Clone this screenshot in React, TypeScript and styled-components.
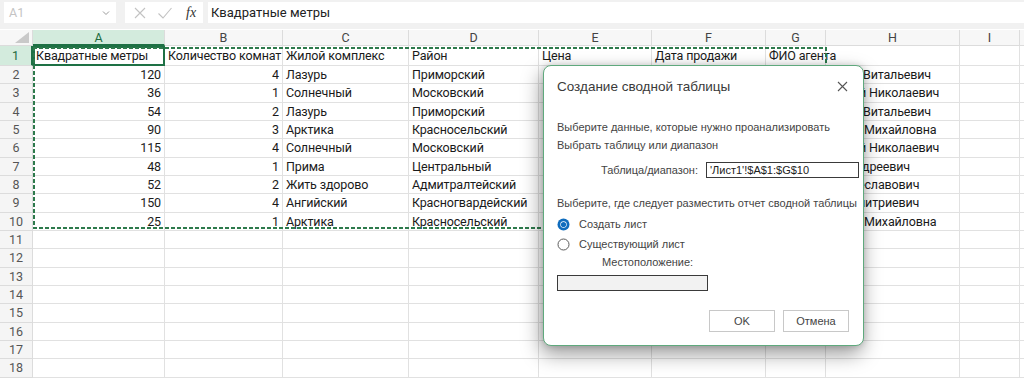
import React from "react";
import styled, { createGlobalStyle } from "styled-components";

const GlobalStyle = createGlobalStyle`
  html, body {
    margin: 0;
    padding: 0;
    background: #ffffff;
    overflow: hidden;
  }
  * { box-sizing: border-box; }
`;

const COLS = [132, 118, 126, 130, 113, 114, 60, 134, 60, 40];
const LETTERS = ["A", "B", "C", "D", "E", "F", "G", "H", "I", "J"];
const ROW_H = 18.33;

// агент: [часть под окном, видимая часть, ширина первой части]
type Agent = [string, string, number];

const agents: Agent[] = [
  ["Петров Иван", "Витальевич", 94],
  ["Смирнов Серге", "й Николаевич", 90],
  ["Петров Иван", "Витальевич", 94],
  ["Орлова Анна", "Михайловна", 95],
  ["Смирнов Серге", "й Николаевич", 90],
  ["Козлов Олег", "Андреевич", 78],
  ["Волков Павел Вяч", "еславович", 89],
  ["Зайцев Кирилл Д", "митриевич", 87],
  ["Орлова Анна", "Михайловна", 95],
];

const rows: string[][] = [
  ["Квадратные метры", "Количество комнат", "Жилой комплекс", "Район", "Цена", "Дата продажи", "ФИО агента"],
  ["120", "4", "Лазурь", "Приморский", "8 400 000", "12.01.2023"],
  ["36", "1", "Солнечный", "Московский", "3 900 000", "18.01.2023"],
  ["54", "2", "Лазурь", "Приморский", "5 200 000", "02.02.2023"],
  ["90", "3", "Арктика", "Красносельский", "7 100 000", "15.02.2023"],
  ["115", "4", "Солнечный", "Московский", "9 800 000", "01.03.2023"],
  ["48", "1", "Прима", "Центральный", "4 600 000", "11.03.2023"],
  ["52", "2", "Жить здорово", "Адмитралтейский", "5 000 000", "24.03.2023"],
  ["150", "4", "Ангийский", "Красногвардейский", "12 300 000", "05.04.2023"],
  ["25", "1", "Арктика", "Красносельский", "2 700 000", "19.04.2023"],
];

const numericCols = new Set([0, 1, 4, 5]);

const Page = styled.div`
  position: relative;
  width: 1024px;
  height: 379px;
  overflow: hidden;
  background: #ffffff;
  font-family: "Roboto", "Noto Sans", sans-serif;
`;

const TopBar = styled.div`
  height: 30px;
  background: #f1f1f1;
  display: flex;
  align-items: flex-start;
  padding: 2px 0 0 4px;
  gap: 9px;
  border-bottom: 1px solid #ffffff;
`;

const NameBox = styled.div`
  width: 112px;
  height: 21px;
  background: #ffffff;
  display: flex;
  align-items: center;
  justify-content: space-between;
  padding: 0 6px 0 5px;
  color: #c4c4c4;
  font-size: 12.5px;
`;

const FxBox = styled.div`
  width: 78px;
  height: 21px;
  background: #ffffff;
  display: flex;
  align-items: center;
  gap: 10px;
  padding-left: 8px;
`;

const FxLabel = styled.span`
  font-family: "Liberation Serif", "DejaVu Serif", serif;
  font-style: italic;
  font-size: 14px;
  color: #333333;
  margin-left: 3px;
`;

const FormulaInput = styled.div`
  flex: 1;
  height: 21px;
  background: #ffffff;
  display: flex;
  align-items: center;
  padding-left: 3px;
  font-size: 13px;
  color: #222222;
  margin-left: -4px;
`;

const Sheet = styled.div`
  display: grid;
  grid-template-columns: 33px ${COLS.map((w) => `${w}px`).join(" ")};
  grid-template-rows: 16px 20px repeat(17, ${ROW_H}px);
`;

const Corner = styled.div`
  background: #f7f7f7;
  border-right: 1px solid #dcdcdc;
  border-bottom: 1px solid #dcdcdc;
  display: flex;
  align-items: flex-end;
  justify-content: flex-end;
  padding: 0 3px 2px 0;
`;

const ColHead = styled.div<{ $active?: boolean }>`
  background: ${(p) => (p.$active ? "#d3ebdd" : "#f7f7f7")};
  border-right: 1px solid #dcdcdc;
  border-bottom: ${(p) => (p.$active ? "2px solid #1e7145" : "1px solid #dcdcdc")};
  display: flex;
  align-items: center;
  justify-content: center;
  font-size: 12.5px;
  color: ${(p) => (p.$active ? "#1e6b40" : "#444444")};
`;

const RowHead = styled.div<{ $active?: boolean }>`
  background: ${(p) => (p.$active ? "#d3ebdd" : "#f5f5f5")};
  border-right: ${(p) => (p.$active ? "2px solid #1e7145" : "1px solid #dcdcdc")};
  border-bottom: 1px solid #dcdcdc;
  display: flex;
  align-items: center;
  justify-content: center;
  font-size: 12.5px;
  color: ${(p) => (p.$active ? "#1e6b40" : "#555555")};
`;

const Cell = styled.div<{ $num?: boolean; $selected?: boolean; $clip?: boolean }>`
  position: relative;
  border-right: 1px solid #e1e1e1;
  border-bottom: 1px solid #e1e1e1;
  display: flex;
  align-items: center;
  justify-content: ${(p) => (p.$num ? "flex-end" : "flex-start")};
  padding: 0 3px;
  white-space: nowrap;
  overflow: ${(p) => (p.$clip ? "hidden" : "visible")};
  font-size: 12.5px;
  letter-spacing: -0.15px;
  color: #1a1a1a;
  ${(p) => p.$selected && "outline: 2px solid #1e7145; outline-offset: -2px;"}
`;

const CellText = styled.span<{ $num?: boolean }>`
  ${(p) => (p.$num ? "" : "position: absolute; left: 3px;")}
`;

const NameHidden = styled.span<{ $w: number }>`
  display: inline-block;
  width: ${(p) => p.$w}px;
  overflow: hidden;
  vertical-align: top;
`;

const Marquee = styled.div`
  position: absolute;
  left: 33px;
  top: 47px;
  width: 794px;
  height: 182px;
  pointer-events: none;
  background:
    repeating-linear-gradient(90deg, #2d7a4c 0 4px, transparent 4px 6px) top left / 100% 2px no-repeat,
    repeating-linear-gradient(90deg, #2d7a4c 0 4px, transparent 4px 6px) bottom left / 100% 2px no-repeat,
    repeating-linear-gradient(180deg, #2d7a4c 0 4px, transparent 4px 6px) top left / 2px 100% no-repeat,
    repeating-linear-gradient(180deg, #2d7a4c 0 4px, transparent 4px 6px) top right / 2px 100% no-repeat;
`;

const Dialog = styled.div`
  position: absolute;
  left: 543px;
  top: 65px;
  width: 321px;
  height: 281px;
  background: #ffffff;
  border: 1px solid #5fa97d;
  border-radius: 8px;
  box-shadow: -2px 8px 20px rgba(0, 0, 0, 0.4), 0 0 6px rgba(0, 0, 0, 0.15);
  padding: 10px 5px 0 13px;
  display: flex;
  flex-direction: column;
  font-family: "Liberation Sans", "Noto Sans", sans-serif;
  color: #444444;
`;

const TitleRow = styled.div`
  display: flex;
  align-items: center;
  justify-content: space-between;
  height: 20px;
`;

const Title = styled.div`
  font-size: 13.5px;
  color: #3a3a3a;
`;

const CloseButton = styled.div`
  width: 20px;
  height: 20px;
  display: flex;
  align-items: center;
  justify-content: center;
  margin-right: 6px;
`;

const Line = styled.div<{ $top: number; $indent?: number }>`
  font-size: 11px;
  line-height: 14px;
  height: 14px;
  margin-top: ${(p) => p.$top}px;
  margin-left: ${(p) => p.$indent ?? 0}px;
  white-space: nowrap;
`;

const FieldRow = styled.div<{ $top: number }>`
  display: flex;
  align-items: center;
  margin-top: ${(p) => p.$top}px;
  font-size: 11px;
`;

const FieldLabel = styled.div`
  width: 149px;
  flex-shrink: 0;
  text-align: right;
  padding-right: 8px;
`;

const TextBox = styled.div<{ $width: number; $grey?: boolean; $top?: number }>`
  width: ${(p) => p.$width}px;
  height: 16px;
  flex-shrink: 0;
  margin-top: ${(p) => p.$top ?? 0}px;
  border: 1px solid #3a3a3a;
  background: ${(p) => (p.$grey ? "#f2f2f2" : "#ffffff")};
  font-size: 11px;
  line-height: 14px;
  padding-left: 3px;
  color: #222222;
`;

const RadioRow = styled.div<{ $top: number }>`
  display: flex;
  align-items: center;
  height: 14px;
  gap: 9px;
  margin-top: ${(p) => p.$top}px;
  font-size: 11px;
`;

const Buttons = styled.div`
  display: flex;
  justify-content: flex-end;
  gap: 8px;
  margin-top: 19px;
  margin-right: 9px;
`;

const Button = styled.div`
  width: 66px;
  height: 22px;
  border: 1px solid #c8c8c8;
  background: #ffffff;
  display: flex;
  align-items: center;
  justify-content: center;
  font-size: 11px;
  color: #444444;
`;

function Radio({ checked }: { checked?: boolean }) {
  return (
    <svg width="13" height="13" viewBox="0 0 13 13">
      {checked ? (
        <>
          <circle cx="6.5" cy="6.5" r="6" fill="#0f6cbd" />
          <circle cx="6.5" cy="6.5" r="3.2" fill="#ffffff" />
          <circle cx="6.5" cy="6.5" r="2.6" fill="#0f6cbd" />
        </>
      ) : (
        <circle cx="6.5" cy="6.5" r="5.5" fill="#ffffff" stroke="#5c5c5c" strokeWidth="1" />
      )}
    </svg>
  );
}

function cellContent(r: number, c: number) {
  if (c === 6 && r > 0 && agents[r - 1]) {
    const [hidden, tail, w] = agents[r - 1];
    return (
      <CellText>
        <NameHidden $w={w}>{hidden}</NameHidden>
        {tail}
      </CellText>
    );
  }
  const value = rows[r]?.[c] ?? "";
  if (!value) return null;
  const num = r > 0 && numericCols.has(c);
  return <CellText $num={num}>{value}</CellText>;
}

export default function App() {
  const totalRows = 18;
  return (
    <Page>
      <GlobalStyle />
      <TopBar>
        <NameBox>
          <span>A1</span>
          <svg width="8" height="6" viewBox="0 0 8 6">
            <path d="M1 1.5 L4 4.5 L7 1.5" fill="none" stroke="#9a9a9a" strokeWidth="1" />
          </svg>
        </NameBox>
        <FxBox>
          <svg width="14" height="14" viewBox="0 0 14 14">
            <path d="M2 2 L12 12 M12 2 L2 12" stroke="#c2c2c2" strokeWidth="1.1" />
          </svg>
          <svg width="16" height="14" viewBox="0 0 16 14">
            <path d="M1.5 7.5 L6 12 L14.5 2" fill="none" stroke="#c2c2c2" strokeWidth="1.1" />
          </svg>
          <FxLabel>fx</FxLabel>
        </FxBox>
        <FormulaInput>Квадратные метры</FormulaInput>
      </TopBar>

      <Sheet>
        <Corner>
          <svg width="14" height="11" viewBox="0 0 14 11">
            <path d="M14 0 L14 11 L0 11 Z" fill="#c9c9c9" />
          </svg>
        </Corner>
        {LETTERS.map((l, i) => (
          <ColHead key={l} $active={i === 0}>
            {l === "J" ? "" : l}
          </ColHead>
        ))}
        {Array.from({ length: totalRows }, (_, r) => (
          <React.Fragment key={r}>
            <RowHead $active={r === 0}>{r + 1}</RowHead>
            {LETTERS.map((_, c) => {
              const num = r > 0 && numericCols.has(c);
              const nextFilled = !!rows[r]?.[c + 1];
              return (
                <Cell key={c} $num={num} $selected={r === 0 && c === 0} $clip={nextFilled}>
                  {cellContent(r, c)}
                </Cell>
              );
            })}
          </React.Fragment>
        ))}
      </Sheet>

      <Marquee />

      <Dialog>
        <TitleRow>
          <Title>Создание сводной таблицы</Title>
          <CloseButton>
            <svg width="11" height="11" viewBox="0 0 11 11">
              <path d="M1 1 L10 10 M10 1 L1 10" stroke="#555555" strokeWidth="1.1" />
            </svg>
          </CloseButton>
        </TitleRow>
        <Line $top={24}>Выберите данные, которые нужно проанализировать</Line>
        <Line $top={4}>Выбрать таблицу или диапазон</Line>
        <FieldRow $top={10}>
          <FieldLabel>Таблица/диапазон:</FieldLabel>
          <TextBox $width={153}>'Лист1'!$A$1:$G$10</TextBox>
        </FieldRow>
        <Line $top={18}>Выберите, где следует разместить отчет сводной таблицы</Line>
        <RadioRow $top={7}>
          <Radio checked />
          <span>Создать лист</span>
        </RadioRow>
        <RadioRow $top={6}>
          <Radio />
          <span>Существующий лист</span>
        </RadioRow>
        <Line $top={4} $indent={45}>Местоположение:</Line>
        <TextBox $width={151} $grey $top={6} />
        <Buttons>
          <Button>OK</Button>
          <Button>Отмена</Button>
        </Buttons>
      </Dialog>
    </Page>
  );
}
